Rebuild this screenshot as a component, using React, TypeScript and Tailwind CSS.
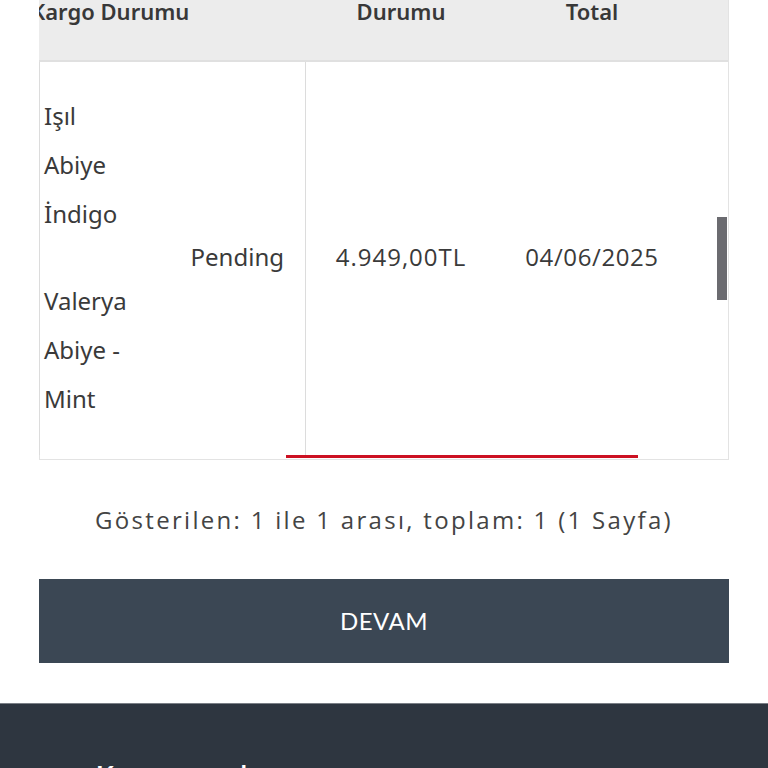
import React from 'react';

const products = [
  ['Işıl', 'Abiye', 'İndigo'],
  ['Valerya', 'Abiye -', 'Mint'],
];

export default function App() {
  return (
    <div className="h-[768px] w-[768px] overflow-hidden bg-white" style={{ fontFamily: '"Noto Sans", sans-serif' }}>
      {/* Orders table (scrolled) */}
      <div className="relative ml-[39px] w-[690px] h-[460px] border-r border-[#e3e3e3]">
        {/* Header */}
        <div className="flex h-[62px] bg-[#ececec] border-b-2 border-[#e0e0e0] text-[22px] font-semibold text-[#383838] leading-[22px]">
          <div className="w-[267px] overflow-hidden whitespace-nowrap">
            <div className="-ml-[8px]">Kargo Durumu</div>
          </div>
          <div className="w-[190px] text-center">Durumu</div>
          <div className="w-[192px] text-center">Total</div>
        </div>

        {/* Row */}
        <div className="flex h-[393px]">
          <div className="w-[267px] flex items-center border-l border-r border-[#dcdcdc] text-[24px] text-[#3a3a3a]">
            <div className="flex flex-col gap-[38px] pl-[4px] pb-[4px] flex-1">
              {products.map((p, i) => (
                <div key={i} className="flex flex-col leading-[49px]">
                  {p.map((l) => (
                    <span key={l}>{l}</span>
                  ))}
                </div>
              ))}
            </div>
            <div className="pr-[21px] pb-[4px]">Pending</div>
          </div>
          <div className="w-[190px] flex items-center justify-center text-[24px] tracking-[1px] text-[#3a3a3a] pb-[4px]" style={{ fontFamily: '"Open Sans", sans-serif' }}>
            4.949,00TL
          </div>
          <div className="w-[192px] flex items-center justify-center text-[24px] tracking-[0.6px] text-[#3a3a3a] pb-[4px]" style={{ fontFamily: '"Open Sans", sans-serif' }}>
            04/06/2025
          </div>
        </div>

        {/* Horizontal scrollbar */}
        <div className="h-[5px] border-b border-[#e3e3e3] border-l">
          <div className="ml-[246px] w-[352px] h-[3px] bg-[#cc1122]" />
        </div>

        {/* Vertical scrollbar thumb */}
        <div className="absolute right-[1px] top-[217px] w-[10px] h-[83px] bg-[#6b6b70]" />
      </div>

      {/* Pagination info */}
      <div className="mt-[45px] text-center text-[24px] leading-[30px] tracking-[2.3px] text-[#444]" style={{ fontFamily: '"Open Sans", sans-serif' }}>
        Gösterilen: 1 ile 1 arası, toplam: 1 (1 Sayfa)
      </div>

      <div className="px-[39px] mt-[44px]">
        <button
          className="w-full h-[84px] bg-[#3b4754] text-white text-[24px] tracking-[0.5px]"
          style={{ fontFamily: 'Lato, sans-serif' }}
        >
          DEVAM
        </button>
      </div>

      {/* Footer */}
      <footer className="mt-[40px] h-[200px] bg-[#2e3640] border-t border-[#7a7f86]">
        <div className="pt-[52px] pl-[96px] text-white text-[26px] font-bold tracking-[6px]" style={{ fontFamily: 'Lato, sans-serif' }}>
          Kurumsal
        </div>
      </footer>
    </div>
  );
}
